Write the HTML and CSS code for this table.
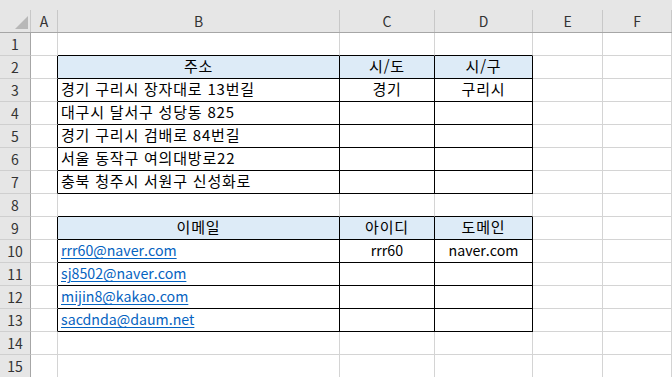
FILE: index.html
```html
<!DOCTYPE html>
<html lang="ko">
<head>
    <meta charset="UTF-8">
    <title>주소 / 이메일 분리</title>
    <link rel="stylesheet" href="styles.css">
</head>
<body>
    <div class="colhead">
        <div class="corner">
            <svg width="13" height="13" viewBox="0 0 13 13"><path d="M13 0 L13 13 L0 13 Z" fill="#b8b8b8"/></svg>
        </div>
        <div>A</div><div>B</div><div>C</div><div>D</div><div>E</div><div>F</div>
    </div>
    <div class="grid">
        <!-- 1 -->
        <div class="rh">1</div><div></div><div class="above"></div><div class="above"></div><div class="above"></div><div></div><div></div>
        <!-- 2: 주소 표 머리글 -->
        <div class="rh">2</div><div class="left"></div><div class="box hd ctr">주소</div><div class="box hd ctr">시/도</div><div class="box hd ctr">시/구</div><div></div><div></div>
        <div class="rh">3</div><div class="left"></div><div class="box">경기 구리시 장자대로 13번길</div><div class="box ctr">경기</div><div class="box ctr">구리시</div><div></div><div></div>
        <div class="rh">4</div><div class="left"></div><div class="box">대구시 달서구 성당동 825</div><div class="box"></div><div class="box"></div><div></div><div></div>
        <div class="rh">5</div><div class="left"></div><div class="box">경기 구리시 검배로 84번길</div><div class="box"></div><div class="box"></div><div></div><div></div>
        <div class="rh">6</div><div class="left"></div><div class="box">서울 동작구 여의대방로22</div><div class="box"></div><div class="box"></div><div></div><div></div>
        <div class="rh">7</div><div class="left"></div><div class="box">충북 청주시 서원구 신성화로</div><div class="box"></div><div class="box"></div><div></div><div></div>
        <!-- 8 -->
        <div class="rh">8</div><div></div><div class="above"></div><div class="above"></div><div class="above"></div><div></div><div></div>
        <!-- 9: 이메일 표 머리글 -->
        <div class="rh">9</div><div class="left"></div><div class="box hd ctr">이메일</div><div class="box hd ctr">아이디</div><div class="box hd ctr">도메인</div><div></div><div></div>
        <div class="rh">10</div><div class="left"></div><div class="box en"><a href="mailto:rrr60@naver.com">rrr60@naver.com</a></div><div class="box en ctr">rrr60</div><div class="box en ctr">naver.com</div><div></div><div></div>
        <div class="rh">11</div><div class="left"></div><div class="box en"><a href="mailto:sj8502@naver.com">sj8502@naver.com</a></div><div class="box"></div><div class="box"></div><div></div><div></div>
        <div class="rh">12</div><div class="left"></div><div class="box en"><a href="mailto:mijin8@kakao.com">mijin8@kakao.com</a></div><div class="box"></div><div class="box"></div><div></div><div></div>
        <div class="rh">13</div><div class="left"></div><div class="box en"><a href="mailto:sacdnda@daum.net">sacdnda@daum.net</a></div><div class="box"></div><div class="box"></div><div></div><div></div>
        <!-- 14, 15 -->
        <div class="rh">14</div><div></div><div></div><div></div><div></div><div></div><div></div>
        <div class="rh">15</div><div></div><div></div><div></div><div></div><div></div><div></div>
    </div>
</body>
</html>
```

FILE: styles.css
```css
body {
    margin: 0;
    background: #fff;
    font-family: "Noto Sans CJK KR", "Noto Sans", sans-serif;
    font-size: 15px;
    color: #000;
    overflow: hidden;
}
.colhead, .grid {
    display: grid;
    grid-template-columns: 31px 27px 282px 95px 98px 70px 1fr;
}

/* column letters */
.colhead {
    height: 33px;
    box-sizing: border-box;
    padding-top: 10px;
    background: #e6e6e6;
    border-bottom: 1px solid #a6a6a6;
}
.colhead > div {
    border-right: 1px solid #c8c8c8;
    text-align: center;
    font-size: 14px;
    line-height: 22px;
    color: #333;
}
.colhead .corner {
    display: flex;
    justify-content: flex-end;
    align-items: flex-end;
    padding: 0 2px 3px 0;
}

/* cells */
.grid {
    grid-auto-rows: 23px;
}
.grid > div {
    box-sizing: border-box;
    border-right: 1px solid #d4d4d4;
    border-bottom: 1px solid #d4d4d4;
    padding: 0 3px;
    line-height: 20px;
    white-space: nowrap;
}
.grid > .rh {
    background: #e6e6e6;
    border-right-color: #a6a6a6;
    border-bottom-color: #cfcfcf;
    padding: 0;
    text-align: center;
    font-size: 14px;
    line-height: 22px;
    color: #333;
}
.grid > .box {
    border-right-color: #000;
    border-bottom-color: #000;
    letter-spacing: 0.8px;
}
.grid > .en {
    font-size: 14.2px;
    letter-spacing: 0;
}
.grid > .above {
    border-bottom-color: #000;
}
.grid > .left {
    border-right-color: #000;
}
.hd {
    background: #ddebf7;
}
.ctr {
    text-align: center;
}
a {
    color: #0563c1;
    text-decoration: underline;
    text-underline-offset: 2px;
}
```
